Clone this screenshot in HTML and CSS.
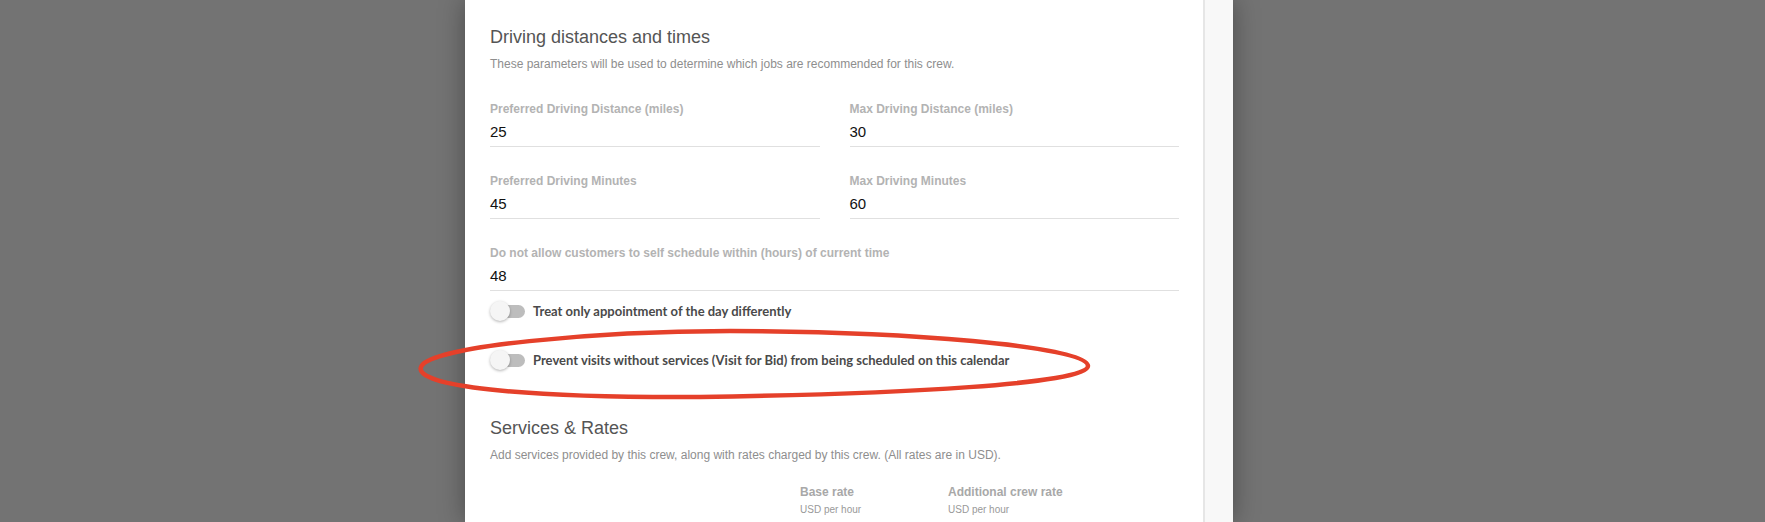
FILE: index.html
```html
<!DOCTYPE html>
<html lang="en">
<head>
    <meta charset="UTF-8">
    <meta name="viewport" content="width=device-width, initial-scale=1.0">
    <title>Crew Settings</title>
    <link rel="stylesheet" href="styles.css">
</head>
<body>
    <div class="modal">
        <div class="content">
            <h2>Driving distances and times</h2>
            <p class="hint">These parameters will be used to determine which jobs are recommended for this crew.</p>

            <div class="fields">
                <div class="field">
                    <label>Preferred Driving Distance (miles)</label>
                    <div class="value">25</div>
                </div>
                <div class="field">
                    <label>Max Driving Distance (miles)</label>
                    <div class="value">30</div>
                </div>
                <div class="field">
                    <label>Preferred Driving Minutes</label>
                    <div class="value">45</div>
                </div>
                <div class="field">
                    <label>Max Driving Minutes</label>
                    <div class="value">60</div>
                </div>
                <div class="field wide">
                    <label>Do not allow customers to self schedule within (hours) of current time</label>
                    <div class="value">48</div>
                </div>
            </div>

            <div class="toggles">
                <div class="toggle">
                    <span class="switch"><span class="knob"></span></span>
                    <span class="toggle-text">Treat only appointment of the day differently</span>
                </div>
                <div class="toggle">
                    <span class="switch"><span class="knob"></span></span>
                    <span class="toggle-text">Prevent visits without services (Visit for Bid) from being scheduled on this calendar</span>
                </div>
            </div>

            <h2 class="section">Services &amp; Rates</h2>
            <p class="hint">Add services provided by this crew, along with rates charged by this crew. (All rates are in USD).</p>

            <div class="rates-head">
                <div></div>
                <div class="rate-col">
                    <div class="rate-title">Base rate</div>
                    <div class="rate-unit">USD per hour</div>
                </div>
                <div class="rate-col">
                    <div class="rate-title">Additional crew rate</div>
                    <div class="rate-unit">USD per hour</div>
                </div>
            </div>
        </div>
        <div class="rail"></div>
    </div>

    <!-- hand drawn highlight -->
    <svg class="highlight" width="1765" height="522" viewBox="0 0 1765 522">
        <path d="M421,367 C428,346 600,331 730,331 C900,331 1088,346 1088,366 C1088,384 900,394 700,397 C520,398 414,386 421,367 Z"
              fill="none" stroke="#e5402a" stroke-width="4.5"/>
    </svg>
</body>
</html>
```

FILE: styles.css
```css
body {
    margin: 0;
    height: 522px;
    overflow: hidden;
    background-color: #737373;
    font-family: "Liberation Sans", Arial, sans-serif;
}
.modal {
    display: flex;
    width: 768px;
    min-height: 522px;
    margin-left: 465px;
    box-shadow: 0 0 24px rgba(0, 0, 0, 0.35);
}
.content {
    flex: 1;
    background-color: white;
    border-right: 2px solid #e6e6e6;
    padding: 26px 24px 0 25px;
}
.rail {
    width: 28px;
    background-color: #f8f8f8;
}
h2 {
    margin: 0;
    font-size: 18px;
    line-height: 22px;
    font-weight: normal;
    color: #555;
}
h2.section {
    margin-top: 37px;
}
.hint {
    margin: 8px 0 0;
    font-size: 12px;
    line-height: 16px;
    color: #8e8e8e;
}
.fields {
    display: grid;
    grid-template-columns: 1fr 1fr;
    column-gap: 30px;
    row-gap: 26px;
    margin-top: 29px;
}
.field.wide {
    grid-column: 1 / 3;
}
.field label {
    display: block;
    font-size: 12px;
    line-height: 16px;
    font-weight: bold;
    color: #b3b3b3;
}
.field .value {
    margin-top: 5px;
    padding-bottom: 4px;
    font-size: 15px;
    line-height: 20px;
    color: #111;
    border-bottom: 1px solid #e0e0e0;
}
.toggles {
    display: flex;
    flex-direction: column;
    gap: 9px;
}
.toggle {
    display: flex;
    align-items: center;
    height: 40px;
}
.switch {
    display: flex;
    align-items: center;
    width: 34px;
    height: 13px;
    margin-left: 1px;
    border-radius: 7px;
    background-color: #bdbdbd;
}
.knob {
    width: 20px;
    height: 20px;
    margin-left: -1px;
    border-radius: 50%;
    background-color: #f5f5f5;
    box-shadow: 0 1px 3px rgba(0, 0, 0, 0.3);
}
.toggle-text {
    margin-left: 8px;
    font-family: Lato, "Liberation Sans", sans-serif;
    font-weight: bold;
    font-size: 13px;
    color: #4a4a4a;
}
.rates-head {
    display: grid;
    grid-template-columns: 310px 148px auto;
    margin-top: 21px;
}
.rate-title {
    font-size: 12px;
    line-height: 16px;
    font-weight: bold;
    color: #a8a8a8;
}
.rate-unit {
    margin-top: 3px;
    font-size: 10px;
    line-height: 14px;
    color: #999;
}
.highlight {
    position: absolute;
    top: 0;
    left: 0;
    pointer-events: none;
}
```
